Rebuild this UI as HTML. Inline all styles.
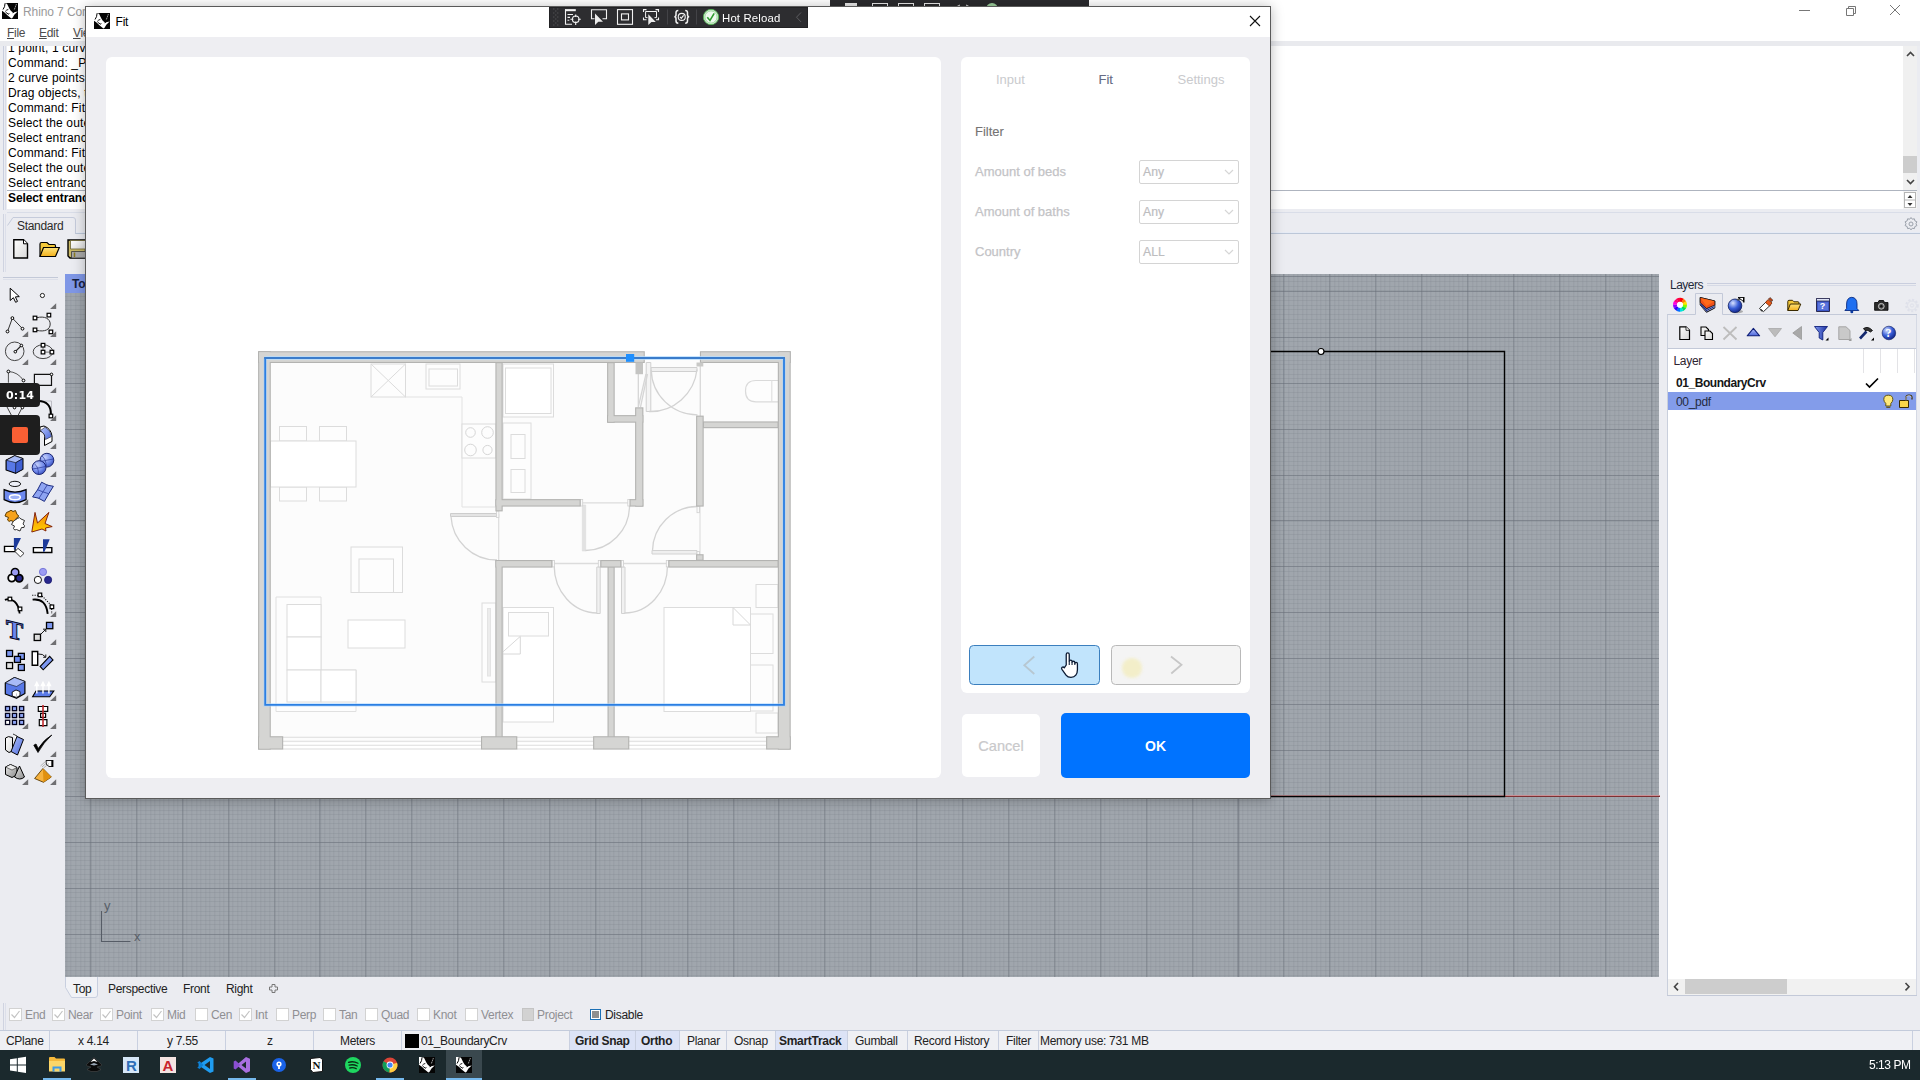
<!DOCTYPE html>
<html lang="en">
<head>
<meta charset="utf-8">
<title>Rhino 7 - Fit</title>
<style>
html,body{margin:0;padding:0;background:#ecedf2;}
body{width:1920px;height:1080px;overflow:hidden;font-family:"Liberation Sans",sans-serif;}
#root{position:relative;width:1920px;height:1080px;overflow:hidden;background:#ebecf1;}
.a{position:absolute;}
.t{position:absolute;white-space:nowrap;line-height:1;color:#1a1a1a;font-size:12px;}
svg{position:absolute;overflow:visible;}
.ui{font-size:12px;color:#222;}
.mn::first-letter{text-decoration:underline;}
</style>
</head>
<body>
<div id="root">
<!-- ===== Rhino main window chrome ===== -->
<div class="a" style="left:0px;top:0px;width:1920px;height:41px;background:#fff;"></div>
<div class="a" style="left:0px;top:41px;width:1920px;height:5px;background:#e9eaee;"></div>
<svg style="left:2px;top:3px" width="16" height="16" viewBox="0 0 16 16"><rect width="16" height="16" fill="#050505"/><path d="M0 0H2.900L5 .8L7.200 5.300L8.600 7.600L10.800 9.400L13.200 9L15.700 8.500L12.500 11.600L10.400 15L9.400 15.500L6 12.800L2.500 9.600L0 7.700Z" fill="#fff"/><path d="M3.100 .2Q3 4 1 6.500" fill="none" stroke="#050505" stroke-width="1"/><path d="M3.300 8.400Q4.400 6.900 6.300 6.400M3.700 9.200L6.600 11.300L7.200 10.200" fill="none" stroke="#050505" stroke-width=".9"/><path d="M10.700 9.800Q12.600 9.200 13.400 7.500" fill="none" stroke="#050505" stroke-width="1"/><path d="M14.300 1.300L12.400 6.400" fill="none" stroke="#fff" stroke-width=".8" stroke-dasharray="1.200 .9"/></svg>
<div class="t" style="left:23px;top:4.5px;font-size:12px;line-height:15px;color:#9a9a9a;letter-spacing:-0.3px;letter-spacing:-0.1px;">Rhino 7 Corporate - [Top]</div>
<div class="t mn" style="left:7px;top:25.500px;font-size:12px;line-height:15px;color:#4c4c4c;letter-spacing:-0.3px;">File</div>
<div class="t mn" style="left:39px;top:25.500px;font-size:12px;line-height:15px;color:#4c4c4c;letter-spacing:-0.3px;">Edit</div>
<div class="t mn" style="left:73px;top:25.500px;font-size:12px;line-height:15px;color:#4c4c4c;letter-spacing:-0.3px;">View</div>
<svg style="left:1790px;top:0" width="130" height="24" viewBox="0 0 130 24"><g stroke="#777" stroke-width="1" fill="none"><path d="M9 10.5h11"/><path d="M56.5 8.5h7v7h-7z M58.500 8.5v-2h7v7h-2" /><path d="M100 5l10 10M110 5l-10 10"/></g></svg>
<div class="a" style="left:7px;top:46px;width:1896px;height:144px;background:#fff;"></div>
<div class="a" style="left:7px;top:190px;width:1910px;height:1px;background:#aeb4bf;"></div>
<div class="a" style="left:7px;top:191px;width:1896px;height:18px;background:#fff;"></div>
<div class="a" style="left:1903px;top:46px;width:14px;height:144px;background:#f0f0f0;"></div>
<div class="a" style="left:1903px;top:156px;width:14px;height:17px;background:#cdcdcd;"></div>
<div class="a" style="left:1903px;top:191px;width:14px;height:18px;background:#f4f4f4;"></div>
<div class="a" style="left:3px;top:46px;width:1px;height:164px;background:#c9cede;"></div>
<div class="a" style="left:5px;top:46px;width:1px;height:164px;background:#d9dce8;"></div>
<svg style="left:1903px;top:46px" width="14" height="164" viewBox="0 0 14 164"><g stroke="#444" stroke-width="1.6" fill="none"><path d="M4 10l3.500 -3.500l3.500 3.500"/><path d="M4 134l3.500 3.500l3.500 -3.500"/></g><rect x="1.500" y="146.500" width="11" height="15" fill="#fff" stroke="#b5b5b5"/><path d="M1.500 154h11" stroke="#b5b5b5"/><path d="M4.500 152l2.500 -3l2.500 3z M4.500 157l2.500 3l2.500 -3z" fill="#333"/></svg>
<div class="a" style="left:7px;top:46px;width:1896px;height:144px;overflow:hidden;">
<div class="t" style="left:1px;top:-4.7px;font-size:12px;line-height:15px;color:#000;letter-spacing:-0.3px;letter-spacing:.15px;">1 point, 1 curve added to selection.</div>
<div class="t" style="left:1px;top:10.3px;font-size:12px;line-height:15px;color:#000;letter-spacing:-0.3px;letter-spacing:.15px;">Command: _Point</div>
<div class="t" style="left:1px;top:25.3px;font-size:12px;line-height:15px;color:#000;letter-spacing:-0.3px;letter-spacing:.15px;">2 curve points, 1 point added to selection.</div>
<div class="t" style="left:1px;top:40.3px;font-size:12px;line-height:15px;color:#000;letter-spacing:-0.3px;letter-spacing:.15px;">Drag objects, tap Alt to make a duplicate</div>
<div class="t" style="left:1px;top:55.3px;font-size:12px;line-height:15px;color:#000;letter-spacing:-0.3px;letter-spacing:.15px;">Command: Fit</div>
<div class="t" style="left:1px;top:70.3px;font-size:12px;line-height:15px;color:#000;letter-spacing:-0.3px;letter-spacing:.15px;">Select the outer boundary curve</div>
<div class="t" style="left:1px;top:85.3px;font-size:12px;line-height:15px;color:#000;letter-spacing:-0.3px;letter-spacing:.15px;">Select entrance point</div>
<div class="t" style="left:1px;top:100.3px;font-size:12px;line-height:15px;color:#000;letter-spacing:-0.3px;letter-spacing:.15px;">Command: Fit</div>
<div class="t" style="left:1px;top:115.3px;font-size:12px;line-height:15px;color:#000;letter-spacing:-0.3px;letter-spacing:.15px;">Select the outer boundary curve</div>
<div class="t" style="left:1px;top:130.3px;font-size:12px;line-height:15px;color:#000;letter-spacing:-0.3px;letter-spacing:.15px;">Select entrance point</div>
</div>
<div class="t" style="left:8px;top:191.3px;font-size:12px;line-height:15px;color:#000;letter-spacing:-0.3px;font-weight:bold;letter-spacing:-0.1px;">Select entrance point:</div>
<div class="a" style="left:7px;top:212px;width:1913px;height:1px;background:#d9dde8;"></div>
<div class="a" style="left:75px;top:232px;width:1845px;height:1px;background:#e6ebf5;"></div>
<div class="a" style="left:75px;top:233px;width:1845px;height:1px;background:#bcc7d8;"></div>
<svg style="left:0;top:210px" width="90" height="30" viewBox="0 0 90 30"><path d="M7.500 15.500 L13 7.500 H73 Q75.500 7.500 75.500 10 V23.500" fill="none" stroke="#c5cbdb"/></svg>
<div class="t" style="left:17px;top:218.5px;font-size:12px;line-height:15px;color:#2b2b2b;letter-spacing:-0.3px;">Standard</div>
<div class="a" style="left:3px;top:214px;width:1px;height:58px;background:#cfd3e0;"></div>
<div class="a" style="left:5px;top:214px;width:1px;height:58px;background:#dcdfea;"></div>
<svg style="left:1903px;top:216px" width="16" height="16" viewBox="0 0 16 16"><g fill="none" stroke="#9aa0aa" stroke-width="1"><circle cx="8" cy="8" r="2"/><path d="M8 1.500l1.300 1.700 2.100 -.4 .5 2.100 2 .9 -.9 1.900 .9 1.900 -2 .9 -.5 2.100 -2.100 -.4 -1.300 1.700 -1.300 -1.700 -2.100 .4 -.5 -2.100 -2 -.9 .9 -1.900 -.9 -1.900 2 -.9 .5 -2.100 2.100 .4z"/></g></svg>
<div class="a" style="left:3px;top:277px;width:55px;height:1px;background:#c3c9d8;"></div>
<div class="a" style="left:3px;top:279px;width:55px;height:1px;background:#dde0ea;"></div>
<div id="vp" class="a" style="left:64.500px;top:274px;width:1594.600px;height:703px;background-color:#a0a6ad;background-image:repeating-linear-gradient(to right,rgba(104,110,120,.50) 0,rgba(104,110,120,.50) 1px,transparent 1px,transparent 45.9px),repeating-linear-gradient(to bottom,rgba(104,110,120,.50) 0,rgba(104,110,120,.50) 1px,transparent 1px,transparent 45.9px),repeating-linear-gradient(to right,rgba(118,124,134,.22) 0,rgba(118,124,134,.22) 1px,transparent 1px,transparent 4.59px),repeating-linear-gradient(to bottom,rgba(118,124,134,.22) 0,rgba(118,124,134,.22) 1px,transparent 1px,transparent 4.59px);background-position:25.30px 0,0 17.00px,25.30px 0,0 17.00px;"></div>
<div class="a" style="left:65px;top:274px;width:30px;height:19px;background:#7f97e6;"></div>
<div class="t" style="left:72px;top:276.5px;font-size:12px;line-height:15px;color:#15203f;letter-spacing:-0.3px;font-weight:bold;">Top</div>
<div class="a" style="left:1270px;top:795px;width:390px;height:1px;background:#c98f94;"></div>
<div class="a" style="left:1270px;top:796px;width:390px;height:1px;background:#7d3033;"></div>
<svg style="left:1260px;top:340px" width="260" height="470" viewBox="0 0 260 470"><path d="M0 11.500H244.500V456.500H0" fill="none" stroke="#000" stroke-width="1.4"/><circle cx="61" cy="11.500" r="3" fill="#fff" stroke="#000" stroke-width="1.200"/></svg>
<svg style="left:94px;top:895px" width="60" height="60" viewBox="0 0 60 60"><path d="M7.500 16V46.500H36.500" fill="none" stroke="#565c66" stroke-width="1.100"/></svg>
<div class="t" style="left:104px;top:898.0px;font-size:13px;line-height:16px;color:#596069;letter-spacing:-0.3px;">y</div>
<div class="t" style="left:134px;top:929.0px;font-size:13px;line-height:16px;color:#596069;letter-spacing:-0.3px;">x</div>
<svg style="left:60px;top:977px" width="50" height="26" viewBox="0 0 50 26"><path d="M5.500 0 V10.500 L11.500 20.500 H35 Q37.500 20.500 37.500 18 V0" fill="#f1f2f6" stroke="#c8cfdf"/></svg>
<div class="t" style="left:73px;top:981.5px;font-size:12px;line-height:15px;color:#222;letter-spacing:-0.3px;">Top</div>
<div class="t" style="left:108px;top:981.5px;font-size:12px;line-height:15px;color:#222;letter-spacing:-0.3px;">Perspective</div>
<div class="t" style="left:183px;top:981.5px;font-size:12px;line-height:15px;color:#222;letter-spacing:-0.3px;">Front</div>
<div class="t" style="left:226px;top:981.5px;font-size:12px;line-height:15px;color:#222;letter-spacing:-0.3px;">Right</div>
<svg style="left:268px;top:983px" width="11" height="11" viewBox="0 0 11 11"><path d="M4 1.500h3v2.500h2.500v3H7v2.500H4V7H1.500V4H4z" fill="none" stroke="#777" stroke-width="1"/></svg>
<div class="a" style="left:3px;top:1003px;width:1px;height:28px;background:#cfd3e0;"></div>
<div class="a" style="left:5px;top:1003px;width:1px;height:28px;background:#dcdfea;"></div>
<div class="a" style="left:9px;top:1008px;width:11px;height:11px;background:#fff;border:1px solid #d2d2d2;"></div>
<svg style="left:9px;top:1008px" width="13" height="13" viewBox="0 0 13 13"><path d="M2.500 6.500l3 3l5 -6.500" fill="none" stroke="#c2c2c2" stroke-width="1.200"/></svg>
<div class="t" style="left:25px;top:1007.5px;font-size:12px;line-height:15px;color:#8f8f93;letter-spacing:-0.3px;">End</div>
<div class="a" style="left:52px;top:1008px;width:11px;height:11px;background:#fff;border:1px solid #d2d2d2;"></div>
<svg style="left:52px;top:1008px" width="13" height="13" viewBox="0 0 13 13"><path d="M2.500 6.500l3 3l5 -6.500" fill="none" stroke="#c2c2c2" stroke-width="1.200"/></svg>
<div class="t" style="left:68px;top:1007.5px;font-size:12px;line-height:15px;color:#8f8f93;letter-spacing:-0.3px;">Near</div>
<div class="a" style="left:100px;top:1008px;width:11px;height:11px;background:#fff;border:1px solid #d2d2d2;"></div>
<svg style="left:100px;top:1008px" width="13" height="13" viewBox="0 0 13 13"><path d="M2.500 6.500l3 3l5 -6.500" fill="none" stroke="#c2c2c2" stroke-width="1.200"/></svg>
<div class="t" style="left:116px;top:1007.5px;font-size:12px;line-height:15px;color:#8f8f93;letter-spacing:-0.3px;">Point</div>
<div class="a" style="left:151px;top:1008px;width:11px;height:11px;background:#fff;border:1px solid #d2d2d2;"></div>
<svg style="left:151px;top:1008px" width="13" height="13" viewBox="0 0 13 13"><path d="M2.500 6.500l3 3l5 -6.500" fill="none" stroke="#c2c2c2" stroke-width="1.200"/></svg>
<div class="t" style="left:167px;top:1007.5px;font-size:12px;line-height:15px;color:#8f8f93;letter-spacing:-0.3px;">Mid</div>
<div class="a" style="left:195px;top:1008px;width:11px;height:11px;background:#fff;border:1px solid #d2d2d2;"></div>
<div class="t" style="left:211px;top:1007.5px;font-size:12px;line-height:15px;color:#8f8f93;letter-spacing:-0.3px;">Cen</div>
<div class="a" style="left:239px;top:1008px;width:11px;height:11px;background:#fff;border:1px solid #d2d2d2;"></div>
<svg style="left:239px;top:1008px" width="13" height="13" viewBox="0 0 13 13"><path d="M2.500 6.500l3 3l5 -6.500" fill="none" stroke="#c2c2c2" stroke-width="1.200"/></svg>
<div class="t" style="left:255px;top:1007.5px;font-size:12px;line-height:15px;color:#8f8f93;letter-spacing:-0.3px;">Int</div>
<div class="a" style="left:276px;top:1008px;width:11px;height:11px;background:#fff;border:1px solid #d2d2d2;"></div>
<div class="t" style="left:292px;top:1007.5px;font-size:12px;line-height:15px;color:#8f8f93;letter-spacing:-0.3px;">Perp</div>
<div class="a" style="left:323px;top:1008px;width:11px;height:11px;background:#fff;border:1px solid #d2d2d2;"></div>
<div class="t" style="left:339px;top:1007.5px;font-size:12px;line-height:15px;color:#8f8f93;letter-spacing:-0.3px;">Tan</div>
<div class="a" style="left:365px;top:1008px;width:11px;height:11px;background:#fff;border:1px solid #d2d2d2;"></div>
<div class="t" style="left:381px;top:1007.5px;font-size:12px;line-height:15px;color:#8f8f93;letter-spacing:-0.3px;">Quad</div>
<div class="a" style="left:417px;top:1008px;width:11px;height:11px;background:#fff;border:1px solid #d2d2d2;"></div>
<div class="t" style="left:433px;top:1007.5px;font-size:12px;line-height:15px;color:#8f8f93;letter-spacing:-0.3px;">Knot</div>
<div class="a" style="left:465px;top:1008px;width:11px;height:11px;background:#fff;border:1px solid #d2d2d2;"></div>
<div class="t" style="left:481px;top:1007.5px;font-size:12px;line-height:15px;color:#8f8f93;letter-spacing:-0.3px;">Vertex</div>
<div class="a" style="left:522px;top:1008px;width:10px;height:11px;background:#d2d2d2;border:1px solid #c4c4c4;"></div>
<div class="t" style="left:537px;top:1007.5px;font-size:12px;line-height:15px;color:#8f8f93;letter-spacing:-0.3px;">Project</div>
<div class="a" style="left:591px;top:1009.500px;width:7px;height:7px;background:#8f8f8f;border:1px solid #fff;outline:1px solid #1b6fb5;outline-offset:0;"></div>
<div class="t" style="left:605px;top:1007.5px;font-size:12px;line-height:15px;color:#222;letter-spacing:-0.3px;">Disable</div>
<div class="a" style="left:0px;top:1031px;width:1920px;height:19px;background:#eff0f4;"></div>
<div class="a" style="left:0px;top:1030px;width:1920px;height:1px;background:#c3cbdb;"></div>
<div class="a" style="left:49px;top:1031px;width:1px;height:19px;background:#c9d0e0;"></div>
<div class="a" style="left:137px;top:1031px;width:1px;height:19px;background:#c9d0e0;"></div>
<div class="a" style="left:225px;top:1031px;width:1px;height:19px;background:#c9d0e0;"></div>
<div class="a" style="left:313px;top:1031px;width:1px;height:19px;background:#c9d0e0;"></div>
<div class="a" style="left:401px;top:1031px;width:1px;height:19px;background:#c9d0e0;"></div>
<div class="a" style="left:569px;top:1031px;width:1px;height:19px;background:#c9d0e0;"></div>
<div class="a" style="left:635px;top:1031px;width:1px;height:19px;background:#c9d0e0;"></div>
<div class="a" style="left:679px;top:1031px;width:1px;height:19px;background:#c9d0e0;"></div>
<div class="a" style="left:726px;top:1031px;width:1px;height:19px;background:#c9d0e0;"></div>
<div class="a" style="left:775px;top:1031px;width:1px;height:19px;background:#c9d0e0;"></div>
<div class="a" style="left:847px;top:1031px;width:1px;height:19px;background:#c9d0e0;"></div>
<div class="a" style="left:907px;top:1031px;width:1px;height:19px;background:#c9d0e0;"></div>
<div class="a" style="left:998px;top:1031px;width:1px;height:19px;background:#c9d0e0;"></div>
<div class="a" style="left:1038px;top:1031px;width:1px;height:19px;background:#c9d0e0;"></div>
<div class="a" style="left:1912px;top:1031px;width:1px;height:19px;background:#c9d0e0;"></div>
<div class="a" style="left:570px;top:1031px;width:65px;height:19px;background:#dce3f6;"></div>
<div class="a" style="left:636px;top:1031px;width:43px;height:19px;background:#dce3f6;"></div>
<div class="a" style="left:776px;top:1031px;width:71px;height:19px;background:#dce3f6;"></div>
<div class="t" style="left:6px;top:1033.5px;font-size:12px;line-height:15px;color:#222;letter-spacing:-0.3px;">CPlane</div>
<div class="t" style="left:78px;top:1033.5px;font-size:12px;line-height:15px;color:#222;letter-spacing:-0.3px;">x 4.14</div>
<div class="t" style="left:167px;top:1033.5px;font-size:12px;line-height:15px;color:#222;letter-spacing:-0.3px;">y 7.55</div>
<div class="t" style="left:267px;top:1033.5px;font-size:12px;line-height:15px;color:#222;letter-spacing:-0.3px;">z</div>
<div class="t" style="left:340px;top:1033.5px;font-size:12px;line-height:15px;color:#222;letter-spacing:-0.3px;">Meters</div>
<div class="a" style="left:405px;top:1034px;width:14px;height:14px;background:#000;"></div>
<div class="t" style="left:421px;top:1033.5px;font-size:12px;line-height:15px;color:#222;letter-spacing:-0.3px;">01_BoundaryCrv</div>
<div class="t" style="left:575px;top:1033.5px;font-size:12px;line-height:15px;color:#222;letter-spacing:-0.3px;font-weight:bold;">Grid Snap</div>
<div class="t" style="left:641px;top:1033.5px;font-size:12px;line-height:15px;color:#222;letter-spacing:-0.3px;font-weight:bold;">Ortho</div>
<div class="t" style="left:687px;top:1033.5px;font-size:12px;line-height:15px;color:#222;letter-spacing:-0.3px;">Planar</div>
<div class="t" style="left:734px;top:1033.5px;font-size:12px;line-height:15px;color:#222;letter-spacing:-0.3px;">Osnap</div>
<div class="t" style="left:779px;top:1033.5px;font-size:12px;line-height:15px;color:#222;letter-spacing:-0.3px;font-weight:bold;">SmartTrack</div>
<div class="t" style="left:855px;top:1033.5px;font-size:12px;line-height:15px;color:#222;letter-spacing:-0.3px;">Gumball</div>
<div class="t" style="left:914px;top:1033.5px;font-size:12px;line-height:15px;color:#222;letter-spacing:-0.3px;">Record History</div>
<div class="t" style="left:1006px;top:1033.5px;font-size:12px;line-height:15px;color:#222;letter-spacing:-0.3px;">Filter</div>
<div class="t" style="left:1040px;top:1033.5px;font-size:12px;line-height:15px;color:#222;letter-spacing:-0.3px;">Memory use: 731 MB</div>
<div class="a" style="left:0px;top:1050px;width:1920px;height:30px;background:#1b292d;"></div>
<div class="a" style="left:446px;top:1050px;width:36px;height:30px;background:#3a484e;"></div>
<div class="a" style="left:43px;top:1078px;width:28px;height:2px;background:#76b9ed;"></div>
<div class="a" style="left:228px;top:1078px;width:28px;height:2px;background:#76b9ed;"></div>
<div class="a" style="left:376px;top:1078px;width:28px;height:2px;background:#76b9ed;"></div>
<div class="a" style="left:446px;top:1078px;width:36px;height:2px;background:#76b9ed;"></div>
<div class="t" style="left:1868.5px;top:1057.5px;font-size:12px;line-height:15px;color:#fff;letter-spacing:-0.3px;letter-spacing:-0.45px;will-change:transform;">5:13 PM</div>
<!-- ===== left toolbars ===== -->
<svg style="left:0;top:0" width="90" height="800" viewBox="0 0 90 800"><defs><linearGradient id="gb" x1="0" y1="0" x2="1" y2="1"><stop offset="0" stop-color="#b4c3f8"/><stop offset="1" stop-color="#4a68dc"/></linearGradient><radialGradient id="gs" cx=".35" cy=".3" r=".8"><stop offset="0" stop-color="#c5d0fa"/><stop offset=".6" stop-color="#6f88ea"/><stop offset="1" stop-color="#3048b8"/></radialGradient><linearGradient id="gy" x1="0" y1="0" x2="0" y2="1"><stop offset="0" stop-color="#fde37a"/><stop offset="1" stop-color="#f2b01c"/></linearGradient><linearGradient id="go" x1="0" y1="0" x2="0" y2="1"><stop offset="0" stop-color="#f58a0a"/><stop offset="1" stop-color="#ffd000"/></linearGradient><linearGradient id="gw" x1="0" y1="0" x2="1" y2="1"><stop offset="0" stop-color="#ffffff"/><stop offset="1" stop-color="#d9d9d9"/></linearGradient><linearGradient id="gg" x1="0" y1="0" x2="1" y2="1"><stop offset="0" stop-color="#e8e8e8"/><stop offset="1" stop-color="#8c8c8c"/></linearGradient></defs><path d="M13.800 239.800H23.500L27.500 243.800V258H13.800Z" fill="url(#gw)" stroke="#000" stroke-width="1.4" /><path d="M23.500 239.800V243.800H27.500" fill="#fff" stroke="#000" stroke-width="1" /><path d="M40 256.500V244Q40 242.500 41.500 242.500H47L49 244.500H54.500Q55.500 244.500 55.500 246V247.500" fill="#f4c93a" stroke="#000" stroke-width="1.2" /><path d="M40 256.500L43.500 247.500H59.300L55.500 256.500Z" fill="url(#gy)" stroke="#000" stroke-width="1.2" /><path d="M68 240H85.500V258H70L68 256Z" fill="#c8b865" stroke="#000" stroke-width="1.4" /><path d="M70.500 240.500H85.500V249H70.500Z" fill="url(#gw)" stroke="#6b6330" stroke-width="0.8" /><path d="M71.500 251.500H85.500V258H71.500Z" fill="#a9a9a9" stroke="#3a3a3a" stroke-width="0.8" /><path d="M74.500 252.500V257" fill="none" stroke="#8a7a20" stroke-width="1.5" /><path d="M10.200 288.200V300.500L13.400 297.700L15.600 302.300L17.500 301.400L15.400 296.900L19.300 296.600Z" fill="#fff" stroke="#000" stroke-width="1" stroke-linejoin="round"/><circle cx="42.4" cy="295.5" r="2.1" fill="#fff" stroke="#222" stroke-width="1"/><path d="M56.2 303.2V309H50.1Z" fill="#6f6f72"/><path d="M7.500 331.500L12.400 318.100L22.500 328.700" fill="none" stroke="#333" stroke-width="1" /><circle cx="7.5" cy="331.5" r="1.4" fill="#fff" stroke="#000" stroke-width="1"/><circle cx="12.4" cy="318.1" r="1.4" fill="#fff" stroke="#000" stroke-width="1"/><circle cx="22.5" cy="328.7" r="1.4" fill="#fff" stroke="#000" stroke-width="1"/><path d="M28.2 331.2V337H22.1Z" fill="#6f6f72"/><path d="M36.500 317.800C45 315.500 50.200 319 50.200 324C50.200 329.500 45 332.300 36.500 330.300" fill="none" stroke="#333" stroke-width="1" /><rect x="33.20" y="316.20" width="3.6" height="3.6" fill="#fff" stroke="#000" stroke-width="1.2"/><rect x="47.10" y="313.30" width="3.6" height="3.6" fill="#fff" stroke="#000" stroke-width="1.2"/><rect x="33.20" y="328.10" width="3.6" height="3.6" fill="#fff" stroke="#000" stroke-width="1.2"/><rect x="49.10" y="330.10" width="3.6" height="3.6" fill="#fff" stroke="#000" stroke-width="1.2"/><path d="M56.2 331.2V337H50.1Z" fill="#6f6f72"/><circle cx="14.7" cy="351.3" r="9.3" fill="none" stroke="#444" stroke-width="1"/><path d="M15.300 351.700L21.400 345.500" fill="none" stroke="#222" stroke-width="1.2" /><circle cx="15.3" cy="351.7" r="1.3" fill="#fff" stroke="#000" stroke-width="1"/><circle cx="21.4" cy="345.5" r="1.3" fill="#fff" stroke="#000" stroke-width="1"/><path d="M28.2 359.2V365H22.1Z" fill="#6f6f72"/><ellipse cx="43" cy="351.700" rx="9.800" ry="6.900" fill="none" stroke="#444" stroke-width="1"/><path d="M43 345.200V352.100H51.900" fill="none" stroke="#555" stroke-width="0.8" /><rect x="41.20" y="343.40" width="3.6" height="3.6" fill="#fff" stroke="#000" stroke-width="1.2"/><rect x="41.20" y="350.30" width="3.6" height="3.6" fill="#fff" stroke="#000" stroke-width="1.2"/><rect x="50.10" y="350.30" width="3.6" height="3.6" fill="#fff" stroke="#000" stroke-width="1.2"/><path d="M56.2 359.2V365H50.1Z" fill="#6f6f72"/><path d="M8.400 382.700V371.500Q18 372 23.500 380.500" fill="none" stroke="#555" stroke-width="1" /><circle cx="8.4" cy="371.5" r="1.4" fill="#fff" stroke="#000" stroke-width="1"/><circle cx="23.5" cy="380.5" r="1.4" fill="#fff" stroke="#000" stroke-width="1"/><path d="M34.400 374.400H51.500V385.400H34.400Z" fill="none" stroke="#111" stroke-width="1.2" /><circle cx="51.5" cy="374.4" r="1.3" fill="#fff" stroke="#000" stroke-width="1"/><path d="M56.2 387.2V393H50.1Z" fill="#6f6f72"/><path d="M6.500 406L11.500 415.500H18L23 406" fill="none" stroke="#444" stroke-width="1" /><circle cx="14.5" cy="407.6" r="1.3" fill="#fff" stroke="#000" stroke-width="1"/><circle cx="22.4" cy="407.6" r="1.3" fill="#fff" stroke="#000" stroke-width="1"/><path d="M40 401H51.500V414.500" fill="none" stroke="#bdbdc4" stroke-width="1" /><path d="M38 401.100Q51 401 50.900 414.500" fill="none" stroke="#000" stroke-width="2" /><rect x="49.10" y="414.20" width="3.6" height="3.6" fill="#fff" stroke="#000" stroke-width="1.2"/><path d="M56.2 415.2V421H50.1Z" fill="#6f6f72"/><path d="M40 427L44 426Q51 428.500 52 436L52 441.500L44.500 445.500V439Q46 433 40 431Z" fill="#fff" stroke="#000" stroke-width="1" /><path d="M40.500 430.500L45 427.300Q50.500 430 51.500 436.500L45.500 439.500Q45.500 434 40.500 430.500Z" fill="url(#gb)" stroke="#223" stroke-width="0.6" /><path d="M56.2 443.2V449H50.1Z" fill="#6f6f72"/><path d="M14.700 455.700L22.800 458.600V469.200L15.500 473.300L6.100 470V460.200Z" fill="#5878e6" stroke="#000" stroke-width="1.2" stroke-linejoin="round"/><path d="M14.700 455.700L22.800 458.600L15.800 462.700L6.100 460.200Z" fill="#a9bbf7" stroke="#000" stroke-width="0.6" /><path d="M15.800 462.700L22.800 458.600V469.200L15.500 473.300Z" fill="#3f5fd2" stroke="#000" stroke-width="0.6" /><path d="M28.2 471.2V477H22.1Z" fill="#6f6f72"/><circle cx="46.9" cy="460.2" r="6.9" fill="url(#gs)" stroke="#1a2470" stroke-width="1"/><circle cx="39.1" cy="467.6" r="6.9" fill="url(#gs)" stroke="#1a2470" stroke-width="1"/><path d="M42 456Q46 459 46.500 467M41 461.500Q47 460 53.500 459M34.500 464Q38.500 466.500 38.500 474.500M32.500 469Q39 468 45.500 466.500" fill="none" stroke="#2a3a9a" stroke-width="0.7" /><path d="M56.2 471.2V477H50.1Z" fill="#6f6f72"/><ellipse cx="14.900" cy="483.900" rx="5.700" ry="2.600" fill="#eef0f8" stroke="#111" stroke-width="1"/><path d="M4.100 489.600Q14.900 494.500 26.100 489.600V499.600Q14.900 505.500 4.100 499.600Z" fill="#6d89ee" stroke="#000" stroke-width="1.2" /><ellipse cx="14.900" cy="497.300" rx="5.400" ry="2.500" fill="#9db0f6" stroke="#fff" stroke-width="1.500"/><path d="M28.2 499.2V505H22.1Z" fill="#6f6f72"/><path d="M41.600 482.200Q47 486 53.400 486.300Q49 493 44.400 501.400Q38 497 32.600 496.900Q38 490 41.600 482.200Z" fill="#8ea4f2" stroke="#1a2a80" stroke-width="1" /><path d="M37 489.500Q42.500 492 49 493.800M47.500 484.500Q43.500 491 38.500 499" fill="none" stroke="#2a3a9a" stroke-width="0.8" /><path d="M56.2 499.2V505H50.1Z" fill="#6f6f72"/><path d="M9 511.500Q11 509 13 511.500L15.500 510.500L17 514.500Q19.500 515 18 517.500L16 518.500L14.500 522L11 520.500Q9 522.500 7.500 520L8.500 517.500L5 516L6.500 512.500Z" fill="#f6a21a" stroke="#5a3a00" stroke-width="1" /><path d="M17.500 518.500Q19.500 516.500 21 519L24.500 520.500L23 524Q25.500 525.500 24 527.500L21.500 527.500L20 531L16.500 529.500Q14.500 531 13.500 528.500L14.500 526L11.500 524.500L13.500 521Z" fill="#fff" stroke="#333" stroke-width="1" /><path d="M35 512.400L37.500 523L48.900 512.400L45 523.500L52.200 526.600L45.500 528L46 531L42 529L31.800 532Z" fill="url(#go)" stroke="#7a1500" stroke-width="0.9" /><path d="M4.500 546.400H15.100V551.600H4.500Z" fill="#fff" stroke="#000" stroke-width="1.4" /><path d="M17.900 548.300L24 553.400L20.400 556.900L15.100 551.600Z" fill="#fff" stroke="#222" stroke-width="0.9" /><path d="M13.900 538.100H21L15.300 549.500H13.900Z" fill="#1c3a9a" stroke="none" stroke-width="0" /><path d="M33.400 547.600H51.800V552.500H33.400Z" fill="#fff" stroke="#000" stroke-width="1.4" /><path d="M43 539.200H49.700L44.500 551.800H43Z" fill="#1c3a9a" stroke="none" stroke-width="0" /><circle cx="15.1" cy="572.3" r="3.6" fill="#9a9af2" stroke="#000" stroke-width="1.8"/><circle cx="11.8" cy="578" r="3.6" fill="#fff" stroke="#000" stroke-width="1.8"/><circle cx="19.2" cy="578.3" r="3.6" fill="#28288e" stroke="#000" stroke-width="1.8"/><circle cx="15.1" cy="572.3" r="2.9" fill="#9a9af2" stroke="#9a9af2" stroke-width="0.1"/><path d="M28.2 583.2V589H22.1Z" fill="#6f6f72"/><circle cx="43" cy="571.9" r="3.6" fill="#9c9cf4" stroke="#6a6ad0" stroke-width="0.8"/><circle cx="37.9" cy="579.9" r="3.6" fill="#fff" stroke="#111" stroke-width="1"/><circle cx="48.1" cy="579.9" r="3.6" fill="#28288e" stroke="#1a1a70" stroke-width="0.8"/><path d="M4.900 599.800Q10 598 14.500 601.500Q19 605.500 19.600 613.500" fill="none" stroke="#000" stroke-width="1.8" /><rect x="8.10" y="597.20" width="3.6" height="3.6" fill="#fff" stroke="#000" stroke-width="1.2"/><rect x="18.20" y="607.10" width="3.6" height="3.6" fill="#fff" stroke="#000" stroke-width="1.2"/><path d="M32.600 599.600Q46 598 47.700 613.900" fill="none" stroke="#000" stroke-width="1.9" /><path d="M32.200 595.200H39M42 596L51.500 605.500M51.700 609V614" fill="none" stroke="#000" stroke-width="1.1" stroke-dasharray="1.1 1.3"/><rect x="38.10" y="593.10" width="3.6" height="3.6" fill="#fff" stroke="#000" stroke-width="1.2"/><rect x="50.10" y="605.00" width="3.6" height="3.6" fill="#fff" stroke="#000" stroke-width="1.2"/><path d="M56.2 611.2V617H50.1Z" fill="#6f6f72"/><rect x="46.50" y="622.40" width="6.3" height="6.3" fill="#7c97f0" stroke="#000" stroke-width="1.3"/><rect x="34.20" y="634.20" width="6.3" height="6.3" fill="#dcdcdc" stroke="#000" stroke-width="1.3"/><path d="M40.500 634.500L45.500 629.500M43 629.200H45.800V632" fill="none" stroke="#000" stroke-width="0.9" /><path d="M56.2 639.2V645H50.1Z" fill="#6f6f72"/><rect x="6.55" y="650.45" width="6" height="6" fill="#7c97f0" stroke="#000" stroke-width="1.3"/><rect x="18.35" y="653.35" width="6" height="6" fill="#7c97f0" stroke="#000" stroke-width="1.3"/><rect x="14.45" y="656.40" width="6" height="6" fill="#6d89ee" stroke="#000" stroke-width="1.3"/><rect x="6.55" y="662.55" width="6" height="6" fill="#e4e4e4" stroke="#000" stroke-width="1.3"/><rect x="18.35" y="664.45" width="6" height="6" fill="#7c97f0" stroke="#000" stroke-width="1.3"/><path d="M32.200 651.500H37.700V665.300H32.200Z" fill="#fff" stroke="#000" stroke-width="1.4" /><path d="M38 654Q43 653.500 45.500 657M43.200 657.300H45.800V654.500" fill="none" stroke="#000" stroke-width="0.9" /><path d="M49.700 656.300L53 660L43.200 669.800L40.100 666.500Z" fill="#7c97f0" stroke="#000" stroke-width="1.1" /><path d="M14.500 677.500L24.900 681.500V693.500L16.500 698.300L5.300 694V683Z" fill="#5878e6" stroke="#000" stroke-width="1.2" stroke-linejoin="round"/><path d="M14.500 677.500L24.900 681.500L16.500 686.500L5.300 683Z" fill="#a9bbf7" stroke="#000" stroke-width="0.5" /><path d="M12.200 692L16 690L20 691.500V695.500L16.500 697.500L12.200 696Z" fill="#fff" stroke="#000" stroke-width="0.9" /><path d="M16.500 693.500V697.500" fill="none" stroke="#999" stroke-width="0.6" /><path d="M28.2 695.2V701H22.1Z" fill="#6f6f72"/><path d="M36 691H53.800L49.700 696.700H32.600Z" fill="#5a7ae6" stroke="#000" stroke-width="1.1" /><path d="M36.8 693.500V684.500M35.199999999999996 685.500L36.8 682.300L38.4 685.500Z" fill="#fff" stroke="#fff" stroke-width="1.4" /><path d="M43 693.500V684.500M41.4 685.500L43 682.300L44.6 685.500Z" fill="#fff" stroke="#fff" stroke-width="1.4" /><path d="M48.9 693.500V684.500M47.3 685.500L48.9 682.300L50.5 685.500Z" fill="#fff" stroke="#fff" stroke-width="1.4" /><path d="M56.2 695.2V701H50.1Z" fill="#6f6f72"/><rect x="5.50" y="706.50" width="4.2" height="4.2" fill="#8ea5f5" stroke="#02021c" stroke-width="1.3"/><rect x="5.50" y="713.40" width="4.2" height="4.2" fill="#8ea5f5" stroke="#02021c" stroke-width="1.3"/><rect x="5.50" y="720.30" width="4.2" height="4.2" fill="#fff" stroke="#02021c" stroke-width="1.3"/><rect x="12.40" y="706.50" width="4.2" height="4.2" fill="#8ea5f5" stroke="#02021c" stroke-width="1.3"/><rect x="12.40" y="713.40" width="4.2" height="4.2" fill="#8ea5f5" stroke="#02021c" stroke-width="1.3"/><rect x="12.40" y="720.30" width="4.2" height="4.2" fill="#8ea5f5" stroke="#02021c" stroke-width="1.3"/><rect x="19.50" y="706.50" width="4.2" height="4.2" fill="#8ea5f5" stroke="#02021c" stroke-width="1.3"/><rect x="19.50" y="713.40" width="4.2" height="4.2" fill="#8ea5f5" stroke="#02021c" stroke-width="1.3"/><rect x="19.50" y="720.30" width="4.2" height="4.2" fill="#8ea5f5" stroke="#02021c" stroke-width="1.3"/><path d="M28.2 723.2V729H22.1Z" fill="#6f6f72"/><path d="M38.300 706.500H47.700V711.400H38.300ZM40.600 713.400H45.600V717.300H40.600ZM39.300 719.600H46.900V725.700H39.300Z" fill="#fff" stroke="#000" stroke-width="1.2" /><path d="M43 704.900V726.900" fill="none" stroke="#c0282d" stroke-width="1.6" /><path d="M56.2 723.2V729H50.1Z" fill="#6f6f72"/><path d="M5.500 738Q8 735.500 12.500 737.500V751L9 752.500L5.500 750Z" fill="url(#gw)" stroke="#000" stroke-width="1" /><path d="M13 734L17 736V741" fill="#fff" stroke="#000" stroke-width="0.8" /><path d="M17 736.500L23.500 739.500L17.500 755L11 751.500Z" fill="url(#gb)" stroke="#000" stroke-width="1" /><path d="M28.2 751.2V757H22.1Z" fill="#6f6f72"/><path d="M33.800 745.200L36 744L38.200 748.500Q44 739.500 51.800 735Q43.500 742.500 38 752.500Z" fill="#000" stroke="#000" stroke-width="0.8" stroke-linejoin="round"/><path d="M56.2 751.2V757H50.1Z" fill="#6f6f72"/><path d="M10.500 764.500L17 767.500V775L12 777.500L5.500 774.500V767Z" fill="url(#gg)" stroke="#000" stroke-width="1" /><path d="M10.500 764.500L17 767.500L12 770L5.500 767Z" fill="#ededed" stroke="#000" stroke-width="0.5" /><path d="M19.500 766L24.500 777Q20 781 14.500 777Z" fill="url(#gg)" stroke="#000" stroke-width="1" /><path d="M28.2 779.2V785H22.1Z" fill="#6f6f72"/><path d="M42.900 768.500L51.300 777L43.500 782.300L34.600 778.500Z" fill="#f6b23f" stroke="#5a3a00" stroke-width="0.9" /><path d="M42.900 768.500L51.300 777L43.500 782.300Z" fill="#e0900f" stroke="none" stroke-width="0" /><path d="M46 760.500H52V766.500H49L46.500 764.500Z" fill="#fff" stroke="#000" stroke-width="0.9" /><path d="M52.500 760V767" fill="none" stroke="#000" stroke-width="1.8" /><path d="M40.500 766L46 761M42 767L47.500 762M43.500 768L49 763.500" fill="none" stroke="#999" stroke-width="0.7" /><path d="M56.2 779.2V785H50.1Z" fill="#6f6f72"/></svg>
<div class="t" style="left:5.500px;top:617px;font-family:'DejaVu Serif','Liberation Serif',serif;font-weight:bold;font-size:23px;line-height:28px;color:#6a86ee;-webkit-text-stroke:.9px #05051e;transform:skewY(14deg);">T</div>
<div class="a" style="left:0;top:383px;width:40px;height:23.500px;background:#1e1e1e;border-radius:0 4px 4px 0;"></div>
<div class="t" style="left:6px;top:387.500px;font-family:'DejaVu Sans','Liberation Sans',sans-serif;font-weight:bold;font-size:11px;line-height:15px;color:#fff;letter-spacing:.2px;will-change:transform;">0:14</div>
<div class="a" style="left:0;top:415px;width:40px;height:39.500px;background:#1e1e1e;border-radius:0 4px 4px 0;"></div>
<div class="a" style="left:12px;top:427px;width:16px;height:16px;background:#f95f34;border-radius:2px;"></div>
<!-- ===== Layers panel ===== -->
<div class="t" style="left:1670px;top:278.0px;font-size:12px;line-height:15px;color:#1f2a3a;letter-spacing:-0.3px;letter-spacing:-0.5px;">Layers</div>
<div class="a" style="left:1707px;top:283px;width:209px;height:1px;background:#c9cede;"></div>
<div class="a" style="left:1707px;top:285px;width:209px;height:1px;background:#d6daE6;"></div>
<div class="a" style="left:1668px;top:349px;width:248px;height:630px;background:#fff;"></div>
<div class="a" style="left:1667px;top:348px;width:250px;height:1px;background:#c3c9d8;"></div>
<div class="a" style="left:1667px;top:314px;width:1px;height:682px;background:#c9cfdc;"></div>
<div class="a" style="left:1916px;top:314px;width:1px;height:682px;background:#d5d9e4;"></div>
<div class="a" style="left:1667px;top:995px;width:250px;height:1px;background:#c3c9d8;"></div>
<div class="a" style="left:1863px;top:349px;width:1px;height:24px;background:#e3e3e6;"></div>
<div class="a" style="left:1880px;top:349px;width:1px;height:24px;background:#e3e3e6;"></div>
<div class="a" style="left:1897px;top:349px;width:1px;height:24px;background:#e3e3e6;"></div>
<div class="a" style="left:1914px;top:349px;width:1px;height:24px;background:#e3e3e6;"></div>
<div class="t" style="left:1673.5px;top:354.0px;font-size:12px;line-height:15px;color:#2e2430;letter-spacing:-0.3px;">Layer</div>
<div class="t" style="left:1676px;top:375.5px;font-size:12px;line-height:15px;color:#161616;letter-spacing:-0.3px;font-weight:bold;letter-spacing:-0.45px;">01_BoundaryCrv</div>
<div class="a" style="left:1668px;top:392px;width:248px;height:18px;background:#839cea;"></div>
<div class="t" style="left:1676px;top:394.8px;font-size:12px;line-height:15px;color:#232a40;letter-spacing:-0.3px;">00_pdf</div>
<div class="a" style="left:1668px;top:979px;width:248px;height:16px;background:#f1f1f1;"></div>
<div class="a" style="left:1685px;top:979px;width:102px;height:15px;background:#cdcdcd;"></div>
<svg style="left:1660px;top:290px" width="260" height="710" viewBox="1660 290 260 710"><defs><linearGradient id="lw" x1="0" y1="0" x2="1" y2="1"><stop offset="0" stop-color="#fff"/><stop offset="1" stop-color="#d4d4d4"/></linearGradient><radialGradient id="lsph" cx=".35" cy=".3" r=".8"><stop offset="0" stop-color="#d8e2ff"/><stop offset=".5" stop-color="#3a5fd8"/><stop offset="1" stop-color="#0a1a78"/></radialGradient><linearGradient id="lbl" x1="0" y1="0" x2="0" y2="1"><stop offset="0" stop-color="#b9c6fa"/><stop offset="1" stop-color="#4b66dc"/></linearGradient><linearGradient id="lfu" x1="0" y1="0" x2="1" y2="0"><stop offset="0" stop-color="#7f98f0"/><stop offset="1" stop-color="#1a2f9e"/></linearGradient><linearGradient id="lyl" x1="0" y1="0" x2="0" y2="1"><stop offset="0" stop-color="#fde37a"/><stop offset="1" stop-color="#f2b01c"/></linearGradient></defs><path d="M1667.500 314.500H1695.500V293.500H1722.500V314.500H1917" fill="none" stroke="#c3c9d8" stroke-width="1" /><path d="M1680.00 297.80A7 7 0 0 1 1683.68 298.85L1681.58 302.25A3 3 0 0 0 1680.00 301.80Z" fill="#ff0000"/><path d="M1683.50 298.74A7 7 0 0 1 1686.16 301.48L1682.64 303.38A3 3 0 0 0 1681.50 302.20Z" fill="#ff8000"/><path d="M1686.06 301.30A7 7 0 0 1 1687.00 305.01L1683.00 304.89A3 3 0 0 0 1682.60 303.30Z" fill="#ffe000"/><path d="M1687.00 304.80A7 7 0 0 1 1685.95 308.48L1682.55 306.38A3 3 0 0 0 1683.00 304.80Z" fill="#80ff00"/><path d="M1686.06 308.30A7 7 0 0 1 1683.32 310.96L1681.42 307.44A3 3 0 0 0 1682.60 306.30Z" fill="#00e060"/><path d="M1683.50 310.86A7 7 0 0 1 1679.79 311.80L1679.91 307.80A3 3 0 0 0 1681.50 307.40Z" fill="#00e0e0"/><path d="M1680.00 311.80A7 7 0 0 1 1676.32 310.75L1678.42 307.35A3 3 0 0 0 1680.00 307.80Z" fill="#0070ff"/><path d="M1676.50 310.86A7 7 0 0 1 1673.84 308.12L1677.36 306.22A3 3 0 0 0 1678.50 307.40Z" fill="#3000ff"/><path d="M1673.94 308.30A7 7 0 0 1 1673.00 304.59L1677.00 304.71A3 3 0 0 0 1677.40 306.30Z" fill="#9000ff"/><path d="M1673.00 304.80A7 7 0 0 1 1674.05 301.12L1677.45 303.22A3 3 0 0 0 1677.00 304.80Z" fill="#ff00e0"/><path d="M1673.94 301.30A7 7 0 0 1 1676.68 298.64L1678.58 302.16A3 3 0 0 0 1677.40 303.30Z" fill="#ff0080"/><path d="M1676.50 298.74A7 7 0 0 1 1680.21 297.80L1680.09 301.80A3 3 0 0 0 1678.50 302.20Z" fill="#ff0040"/><circle cx="1680" cy="304.8" r="3" fill="#fff"/><path d="M1700.200 297.500L1714.800 301V308L1706.500 312.300L1700.200 305Z" fill="#1b2e8a" stroke="#111" stroke-width="1" stroke-linejoin="round"/><path d="M1700.500 303L1706.500 309.500L1714.500 305.500V307.500L1706.500 311.500L1700.500 305Z" fill="#fff" stroke="none" stroke-width="0" /><path d="M1700.500 304L1706.500 310.500L1714.500 306.500" fill="none" stroke="#1b2e8a" stroke-width="1.3" /><path d="M1700.200 297.500L1714.800 301V305L1706.500 308.500L1700.200 302.500Z" fill="#f0501a" stroke="#111" stroke-width="0.6" /><path d="M1700.500 298L1714.500 301.300L1706.500 306Z" fill="#ff6a1a" stroke="none" stroke-width="0" /><ellipse cx="1736.500" cy="311.500" rx="6.500" ry="1.800" fill="#8e8e8e" opacity=".7"/><circle cx="1735" cy="305.800" r="6.800" fill="url(#lsph)" stroke="#0a1a60" stroke-width=".8"/><path d="M1737 300L1741.500 298.200" fill="none" stroke="#555" stroke-width="1.6" /><path d="M1738 297.500H1743.500V301.500L1741 299.500Z" fill="#fff" stroke="#000" stroke-width="0.9" /><path d="M1743.800 297V302.500" fill="none" stroke="#000" stroke-width="1.4" /><path d="M1759.400 308.500L1766.500 301.500L1770.500 305L1763.500 311.600Z" fill="#fff" stroke="#333" stroke-width="1" /><path d="M1760.500 309.500L1762.500 311.300" fill="none" stroke="#333" stroke-width="1.5" /><path d="M1765.500 302.500L1768 299.500L1772 303L1769.500 306Z" fill="#e85a1c" stroke="#7a2a00" stroke-width="0.8" /><path d="M1768.500 299L1770 297.500L1772.800 300L1771.500 301.800Z" fill="#c04010" stroke="#333" stroke-width="0.6" /><path d="M1787.800 310.500V301.500Q1787.800 300.300 1789 300.300H1792.500L1794 301.800H1798Q1799 301.800 1799 303V304" fill="#f4c93a" stroke="#3a2a00" stroke-width="1" /><path d="M1787.800 310.500L1790.300 304H1800.800L1798 310.500Z" fill="url(#lyl)" stroke="#3a2a00" stroke-width="1" /><path d="M1816.500 298.500H1829.500V311.500H1816.500Z" fill="#3c57c8" stroke="#2a2a50" stroke-width="1" /><path d="M1816.500 298.500H1829.500V301H1816.500Z" fill="#dfe4f6" stroke="#2a2a50" stroke-width="0.8" /><path d="M1818 302.500H1828V310H1818Z" fill="#5a74dc" stroke="none" stroke-width="0" /><path d="M1851.800 297.300Q1857 297.800 1857 304V308.500L1858.800 310.500H1844.900L1846.600 308.500V304Q1846.600 297.800 1851.800 297.300Z" fill="#1f6ff0" stroke="#0a2a80" stroke-width="0.9" /><circle cx="1851.800" cy="311.800" r="1.500" fill="#0a3aa0"/><path d="M1874.600 302.500H1878L1879 300.500H1883.500L1884.500 302.500H1888V310.300H1874.600Z" fill="#2b2b2b" stroke="#000" stroke-width="0.8" /><circle cx="1881.300" cy="306.300" r="2.900" fill="#555" stroke="#ddd" stroke-width=".8"/><circle cx="1881.300" cy="306.300" r="1.200" fill="#111"/><circle cx="1912" cy="305.500" r="5.800" fill="none" stroke="#dfe1ea" stroke-width="2" stroke-dasharray="2.200 1.600"/><circle cx="1912" cy="305.500" r="4.500" fill="none" stroke="#dfe1ea" stroke-width="1"/><circle cx="1912" cy="305.500" r="1.600" fill="none" stroke="#dfe1ea" stroke-width="1"/><path d="M1679.800 326.800H1686L1689.500 330.300V339.500H1679.800Z" fill="url(#lw)" stroke="#000" stroke-width="1.2" /><path d="M1686 326.800V330.300H1689.500" fill="#fff" stroke="#000" stroke-width="0.8" /><path d="M1701 327H1706L1708.500 329.500V335.500H1701Z" fill="url(#lw)" stroke="#000" stroke-width="1.1" /><path d="M1705 331H1710L1712.500 333.500V339.500H1705Z" fill="url(#lw)" stroke="#000" stroke-width="1.1" /><path d="M1723.500 327L1736.500 339.500M1736.500 327L1723.500 339.500" fill="none" stroke="#bdbdbd" stroke-width="1.8" /><path d="M1747.200 335.800L1753.400 328.300L1759.600 335.800Z" fill="url(#lbl)" stroke="#10207a" stroke-width="1.1" stroke-linejoin="round"/><path d="M1768.500 328.500H1781.500L1775 336.800Z" fill="#bcbcbc" stroke="#a8a8a8" stroke-width="0.8" /><path d="M1801.500 326.500V339.500L1792.800 333Z" fill="#a9a9a9" stroke="#999" stroke-width="0.8" /><path d="M1814.500 326.500H1827.500L1822.800 332.500V340L1819.200 338V332.500Z" fill="url(#lfu)" stroke="#10207a" stroke-width="0.9" /><path d="M1828.500 337.500V340.500H1825.500Z" fill="#000" stroke="none" stroke-width="0" /><path d="M1838.800 326.800H1846L1850 330.500V339.500H1838.800Z" fill="#c9c9c9" stroke="#a5a5a5" stroke-width="1" /><path d="M1851.500 338V341H1848.500Z" fill="#9a9a9a" stroke="none" stroke-width="0" /><path d="M1860 338.500L1866.500 331.500" fill="none" stroke="#14286e" stroke-width="2.6" /><path d="M1863.500 328.500Q1868 325.500 1872.500 330.500L1870.500 332Q1868 329.500 1865 330.500Z" fill="#333" stroke="#000" stroke-width="0.8" /><path d="M1874 337.500V340.500H1871Z" fill="#000" stroke="none" stroke-width="0" /><circle cx="1888.900" cy="333" r="6.800" fill="url(#lsph)" stroke="#0a1a60" stroke-width=".6"/><path d="M1866 383.500L1869.500 387L1878 378.500" fill="none" stroke="#000" stroke-width="1.7" /><path d="M1888.300 395.200Q1892.800 395.200 1892.800 399.500Q1892.800 401.500 1890.800 403.500V406H1885.800V403.500Q1883.800 401.500 1883.800 399.500Q1883.800 395.200 1888.300 395.200Z" fill="#ffe97a" stroke="#5a4a00" stroke-width="0.9" /><path d="M1886.300 407.300H1890.300" fill="none" stroke="#5a4a00" stroke-width="1" /><path d="M1899.500 400.500H1908.500V407.500H1899.500Z" fill="#f8d54a" stroke="#3a2a00" stroke-width="1" /><path d="M1906 400.500V397.500Q1906 395 1909 395Q1912 395 1912 397.500V399.500" fill="none" stroke="#3a2a00" stroke-width="1.2" /><path d="M1906 400.500V397.500Q1906 395.600 1909 395.600Q1911.400 395.600 1911.400 397.500" fill="none" stroke="#fff" stroke-width="0.5" /><path d="M1678 983l-3.500 3.700l3.500 3.700" fill="none" stroke="#444" stroke-width="1.6" /><path d="M1905.500 983l3.500 3.700l-3.500 3.700" fill="none" stroke="#444" stroke-width="1.6" /></svg>
<div class="t" style="left:1885.6px;top:325.7px;font-size:12px;line-height:15px;color:#fff;letter-spacing:-0.3px;font-weight:bold;font-family:'Liberation Serif',serif;">?</div>
<div class="t" style="left:1819.8px;top:300.8px;font-size:9px;line-height:11px;color:#fff;letter-spacing:-0.3px;font-weight:bold;">?</div>
<!-- ===== taskbar icons ===== -->
<svg style="left:0;top:1050px" width="500" height="30" viewBox="0 1050 500 30">
<path d="M10 1059.200L16.800 1058.200V1064.400H10ZM17.800 1058L26 1056.800V1064.400H17.800ZM10 1065.400H16.800V1071.600L10 1070.600ZM17.800 1065.400H26V1073L17.800 1071.800Z" fill="#fff" stroke="none" stroke-width="0" />
<path d="M49 1058Q49 1057 50 1057H54.500L56 1058.500H64Q65 1058.500 65 1059.500V1071H49Z" fill="#f6b93b" stroke="none" stroke-width="0" />
<path d="M49 1061H65V1071.500H49Z" fill="#fcd668" stroke="none" stroke-width="0" />
<path d="M52.500 1066.500H61.500V1071.500H52.500Z" fill="#3f9ae6" stroke="none" stroke-width="0" />
<path d="M54.500 1068.500H59.500V1071.500H54.500Z" fill="#fcd668" stroke="none" stroke-width="0" />
<path d="M94 1057.500L101.500 1064.500Q102 1065.500 100.500 1066L97 1067L101 1069.500L97 1071.500H91L87 1069.500L91 1067L87.500 1066Q86 1065.500 86.500 1064.500Z" fill="#0a0a0a" stroke="#555" stroke-width="0.5" />
<path d="M94 1058.500L97.500 1062L94 1061L90.500 1062Z" fill="#fff" stroke="none" stroke-width="0" />
<path d="M90 1064.500L94 1063L98 1064.500L94 1065.500Z" fill="#9aa7b5" stroke="none" stroke-width="0" />
<path d="M123 1057H139V1073H123Z" fill="#d5e6f7" stroke="none" stroke-width="0" />
<path d="M160 1057H176V1073H160Z" fill="#f4e4e2" stroke="none" stroke-width="0" />
<path d="M210 1057L213.500 1058.500V1071.500L210 1073L198 1065ZM210 1061V1069L204.500 1065Z" fill="#1f9cf0" stroke="none" stroke-width="0" fill-rule="evenodd"/>
<path d="M199.500 1061L197.300 1062.500L200 1065L197.300 1067.500L199.500 1069L203.500 1065Z" fill="#0d7fd4" stroke="none" stroke-width="0" />
<path d="M246 1057L250 1058.800V1071.200L246 1073L236.500 1065ZM246 1061.500V1068.500L241.500 1065Z" fill="#a96fe0" stroke="none" stroke-width="0" fill-rule="evenodd"/>
<path d="M235.500 1060.500L233.700 1061.500V1068.500L235.500 1069.500L240.500 1065Z" fill="#8a4fd0" stroke="none" stroke-width="0" />
<circle cx="279" cy="1065" r="7" fill="#1a63e8"/><circle cx="279" cy="1064" r="2.600" fill="#fff"/><rect x="278.100" y="1064" width="1.800" height="5" fill="#fff"/><circle cx="279" cy="1064" r="1.100" fill="#1a63e8"/>
<path d="M310.500 1058.500L320 1057.500L322.500 1059.500V1071.500L313 1072.500L310.500 1069.500Z" fill="#fff" stroke="#111" stroke-width="1" />
<circle cx="353" cy="1065" r="8" fill="#1ed760"/>
<path d="M348.500 1062.300Q353.500 1060.800 358 1063.300M349 1065.200Q353.300 1064 357.200 1066M349.800 1068Q353.200 1067.200 356.200 1068.700" fill="none" stroke="#0a2a12" stroke-width="1.3" stroke-linecap="round"/>
<circle cx="390" cy="1065" r="7.500" fill="#db4437"/>
<path d="M390 1065L383.500 1061.300A7.500 7.500 0 0 0 389.500 1072.500Z" fill="#0f9d58" stroke="none" stroke-width="0" />
<path d="M390 1065L389.500 1072.500A7.500 7.500 0 0 0 397.100 1062.700Z" fill="#ffcd40" stroke="none" stroke-width="0" />
<circle cx="390" cy="1065" r="3.400" fill="#fff"/><circle cx="390" cy="1065" r="2.600" fill="#4285f4"/>
</svg>
<svg style="left:419px;top:1057px" width="16" height="16" viewBox="0 0 16 16"><rect width="16" height="16" fill="#050505"/><path d="M0 0H2.900L5 .8L7.200 5.300L8.600 7.600L10.800 9.400L13.200 9L15.700 8.500L12.500 11.600L10.400 15L9.400 15.500L6 12.800L2.500 9.600L0 7.700Z" fill="#fff"/><path d="M3.100 .2Q3 4 1 6.500" fill="none" stroke="#050505" stroke-width="1"/><path d="M3.300 8.400Q4.400 6.900 6.300 6.400M3.700 9.200L6.600 11.300L7.200 10.200" fill="none" stroke="#050505" stroke-width=".9"/><path d="M10.700 9.800Q12.600 9.200 13.400 7.500" fill="none" stroke="#050505" stroke-width="1"/><path d="M14.300 1.300L12.400 6.400" fill="none" stroke="#fff" stroke-width=".8" stroke-dasharray="1.200 .9"/></svg>
<svg style="left:456px;top:1057px" width="16" height="16" viewBox="0 0 16 16"><rect width="16" height="16" fill="#050505"/><path d="M0 0H2.900L5 .8L7.200 5.300L8.600 7.600L10.800 9.400L13.200 9L15.700 8.500L12.500 11.600L10.400 15L9.400 15.500L6 12.800L2.500 9.600L0 7.700Z" fill="#fff"/><path d="M3.100 .2Q3 4 1 6.500" fill="none" stroke="#050505" stroke-width="1"/><path d="M3.300 8.400Q4.400 6.900 6.300 6.400M3.700 9.200L6.600 11.300L7.200 10.200" fill="none" stroke="#050505" stroke-width=".9"/><path d="M10.700 9.800Q12.600 9.200 13.400 7.500" fill="none" stroke="#050505" stroke-width="1"/><path d="M14.300 1.300L12.400 6.400" fill="none" stroke="#fff" stroke-width=".8" stroke-dasharray="1.200 .9"/></svg>
<div class="t" style="left:126px;top:1055.8px;font-size:15px;line-height:19px;color:#2f6fb7;font-weight:bold;">R</div>
<div class="t" style="left:162.5px;top:1055.8px;font-size:15px;line-height:19px;color:#c8252c;font-weight:bold;">A</div>
<div class="t" style="left:312.5px;top:1058.3px;font-size:11px;line-height:14px;color:#111;font-weight:bold;font-family:'Liberation Serif',serif;">N</div>
<!-- ===== peeking dark toolbar behind dialog ===== -->
<div class="a" style="left:830px;top:0px;width:259px;height:7px;background:#2a2a2d;"></div>
<svg style="left:830px;top:0" width="259" height="7" viewBox="0 0 259 7"><g fill="none" stroke="#e8e8e8" stroke-width="1"><rect x="15.500" y="3.500" width="11" height="6" fill="#e8e8e8"/><rect x="42.500" y="3.500" width="15" height="6"/><rect x="68.500" y="3.500" width="15" height="6"/><rect x="94.500" y="3.500" width="15" height="6"/><path d="M127 6.500l3 -1.500M136 5l3 1.500"/></g><circle cx="162" cy="9" r="6" fill="#9ccf9c"/></svg>
<!-- ===== Fit dialog ===== -->
<div id="dlg" class="a" style="left:85px;top:6px;width:1184px;height:791px;border:1px solid #5a5a5a;background:#eeeef2;box-shadow:0 1px 12px rgba(0,0,0,.28);"></div>
<div class="a" style="left:86px;top:7px;width:1184px;height:30px;background:#fff;"></div>
<svg style="left:94px;top:13px" width="16" height="16" viewBox="0 0 16 16"><rect width="16" height="16" fill="#050505"/><path d="M0 0H2.900L5 .8L7.200 5.300L8.600 7.600L10.800 9.400L13.200 9L15.700 8.500L12.500 11.600L10.400 15L9.400 15.500L6 12.800L2.500 9.600L0 7.700Z" fill="#fff"/><path d="M3.100 .2Q3 4 1 6.500" fill="none" stroke="#050505" stroke-width="1"/><path d="M3.300 8.400Q4.400 6.900 6.300 6.400M3.700 9.200L6.600 11.300L7.200 10.200" fill="none" stroke="#050505" stroke-width=".9"/><path d="M10.700 9.800Q12.600 9.200 13.400 7.500" fill="none" stroke="#050505" stroke-width="1"/><path d="M14.300 1.300L12.400 6.400" fill="none" stroke="#fff" stroke-width=".8" stroke-dasharray="1.200 .9"/></svg>
<div class="t" style="left:115.5px;top:14.5px;font-size:12px;line-height:15px;color:#000;letter-spacing:-0.2px;">Fit</div>
<svg style="left:1249px;top:15px" width="12" height="12" viewBox="0 0 12 12"><path d="M1 1l10 10M11 1L1 11" stroke="#111" stroke-width="1.100" fill="none"/></svg>
<div class="a" style="left:549px;top:7px;width:259px;height:21px;background:#2d2d30;box-sizing:border-box;border:1px solid #222224;"></div>
<svg style="left:549px;top:7px" width="259" height="21" viewBox="0 0 259 21"><rect x="4.300" y="1.5" width="1" height="1" fill="#5e5e62"/><rect x="8.300" y="1.5" width="1" height="1" fill="#5e5e62"/><rect x="6.300" y="3.5" width="1" height="1" fill="#5e5e62"/><rect x="4.300" y="5.5" width="1" height="1" fill="#5e5e62"/><rect x="8.300" y="5.5" width="1" height="1" fill="#5e5e62"/><rect x="6.300" y="7.5" width="1" height="1" fill="#5e5e62"/><rect x="4.300" y="9.5" width="1" height="1" fill="#5e5e62"/><rect x="8.300" y="9.5" width="1" height="1" fill="#5e5e62"/><rect x="6.300" y="11.5" width="1" height="1" fill="#5e5e62"/><rect x="4.300" y="13.5" width="1" height="1" fill="#5e5e62"/><rect x="8.300" y="13.5" width="1" height="1" fill="#5e5e62"/><rect x="6.300" y="15.5" width="1" height="1" fill="#5e5e62"/><rect x="4.300" y="17.5" width="1" height="1" fill="#5e5e62"/><rect x="8.300" y="17.5" width="1" height="1" fill="#5e5e62"/><g fill="none" stroke="#f2f2f2" stroke-width="1.100"><rect x="16" y="2.100" width="10.800" height="2.100" fill="#f2f2f2" stroke="none"/><path d="M16.500 2.500V17.300H23 M18.500 7.500H24 M18.500 10.400H21 M18.500 13.300H20.300"/><circle cx="26.700" cy="12.300" r="3.300"/><path d="M26.700 7.500V10M26.700 14.600V17.900M21.400 12.300H24.400M29 12.300H31.800"/><path d="M45.500 11.700H42.500V2.700H57.500V11.700H53.500"/><rect x="68.500" y="2.600" width="15" height="14.700"/><rect x="72.500" y="6.900" width="7" height="6"/><path d="M94.500 5V2.600H97.500 M106.500 2.600H109.500V5 M109.500 10.500V12.700H107 M94.500 10.500V12.700H97.500"/><path d="M98.500 10.600H96.600V4.500H107.500V10.600H105.500" stroke-width="1"/><path d="M129.300 3.400Q127 3.400 127 5.600V7.800Q127 9.800 125.300 9.800Q127 9.800 127 11.800V14Q127 16.200 129.300 16.200 M136.200 3.400Q138.500 3.400 138.500 5.600V7.800Q138.500 9.800 140.200 9.800Q138.500 9.800 138.500 11.800V14Q138.500 16.200 136.200 16.200" stroke-width="1.500"/><circle cx="132.750" cy="9.900" r="3.500"/><path d="M131 9.900l1.300 1.400l2.300 -2.900" stroke-width="1.200"/></g><path d="M46 6.600V17.900L49.300 14.800H54Z" fill="#ececec"/><path d="M99.300 7.300V18L102.400 15.100H106.800Z" fill="#ececec"/><path d="M118.500 2.500V17.500M147.500 2.500V17.500" stroke="#434347" stroke-width="1"/><circle cx="162" cy="10" r="7.600" fill="#f6fff6" stroke="#58b358" stroke-width="1"/><circle cx="162" cy="10" r="6.200" fill="#eef9ee" stroke="#86cc86" stroke-width=".9"/><path d="M158.300 10.200l2.700 3.200l4.200 -7" fill="none" stroke="#2e9b2e" stroke-width="1.600"/><path d="M252 5.500l-4.500 4.700l4.500 4.700" fill="none" stroke="#5c5c60" stroke-width="1"/></svg>
<div class="t" style="left:721.5px;top:10.8px;font-size:11.4px;line-height:14px;color:#fff;letter-spacing:.15px;will-change:transform;">Hot Reload</div>
<div class="a" style="left:106px;top:57px;width:835px;height:721px;background:#fff;border-radius:6px;"></div>
<div class="a" style="left:961px;top:57px;width:289px;height:636px;background:#fff;border-radius:6px;"></div>
<div class="t" style="left:996px;top:71.5px;font-size:13px;line-height:16px;color:#c9cacd;">Input</div>
<div class="t" style="left:1098.5px;top:71.5px;font-size:13px;line-height:16px;color:#666b84;-webkit-text-stroke:.1px #666b84;">Fit</div>
<div class="t" style="left:1177.5px;top:71.5px;font-size:13px;line-height:16px;color:#c9cacd;">Settings</div>
<div class="t" style="left:975px;top:123.5px;font-size:13px;line-height:16px;color:#757373;-webkit-text-stroke:.1px #757373;">Filter</div>
<div class="t" style="left:975px;top:164.0px;font-size:13px;line-height:16px;color:#c3c3c6;-webkit-text-stroke:.25px #c3c3c6;">Amount of beds</div>
<div class="a" style="left:1139px;top:160px;width:98px;height:22px;border:1px solid #d4d4d4;border-radius:2px;background:#fff;"></div>
<div class="t" style="left:1143px;top:164.5px;font-size:12.2px;line-height:15px;color:#bdbdbf;-webkit-text-stroke:.2px #bdbdbf;">Any</div>
<svg style="left:1224px;top:169px" width="10" height="7" viewBox="0 0 10 7"><path d="M1 1l4 4l4 -4" fill="none" stroke="#d6d6d6" stroke-width="1.200"/></svg>
<div class="t" style="left:975px;top:204.0px;font-size:13px;line-height:16px;color:#c3c3c6;-webkit-text-stroke:.25px #c3c3c6;">Amount of baths</div>
<div class="a" style="left:1139px;top:200px;width:98px;height:22px;border:1px solid #d4d4d4;border-radius:2px;background:#fff;"></div>
<div class="t" style="left:1143px;top:204.5px;font-size:12.2px;line-height:15px;color:#bdbdbf;-webkit-text-stroke:.2px #bdbdbf;">Any</div>
<svg style="left:1224px;top:209px" width="10" height="7" viewBox="0 0 10 7"><path d="M1 1l4 4l4 -4" fill="none" stroke="#d6d6d6" stroke-width="1.200"/></svg>
<div class="t" style="left:975px;top:244.0px;font-size:13px;line-height:16px;color:#c3c3c6;-webkit-text-stroke:.25px #c3c3c6;">Country</div>
<div class="a" style="left:1139px;top:240px;width:98px;height:22px;border:1px solid #d4d4d4;border-radius:2px;background:#fff;"></div>
<div class="t" style="left:1143px;top:244.5px;font-size:12.2px;line-height:15px;color:#bdbdbf;-webkit-text-stroke:.2px #bdbdbf;">ALL</div>
<svg style="left:1224px;top:249px" width="10" height="7" viewBox="0 0 10 7"><path d="M1 1l4 4l4 -4" fill="none" stroke="#d6d6d6" stroke-width="1.200"/></svg>
<div class="a" style="left:969px;top:645px;width:129.400px;height:37.800px;border:1.200px solid #3b7fbe;border-radius:4.500px;background:#c1e4fc;"></div>
<div class="a" style="left:1111px;top:645px;width:128.400px;height:37.800px;border:1.200px solid #b9b9b9;border-radius:4.500px;background:#f4f4f4;"></div>
<svg style="left:1015px;top:650px" width="30" height="30" viewBox="1015 650 30 30"><path d="M1034.300 656.500L1024.300 665.300L1034.300 674" fill="none" stroke="#b7c7d1" stroke-width="1.800"/></svg>
<svg style="left:1160px;top:650px" width="30" height="30" viewBox="1160 650 30 30"><path d="M1171 656.500L1181.500 664.800L1171.300 673.500" fill="none" stroke="#c7c7c7" stroke-width="1.800"/></svg>
<div class="a" style="left:1122px;top:658px;width:19.500px;height:19.500px;border-radius:50%;background:#f3eec6;filter:blur(1.600px);opacity:.92;"></div>
<svg style="left:1059px;top:650.500px" width="22" height="28" viewBox="0 0 20 26"><path d="M6.500 13V3.200q0 -1.500 1.400 -1.500q1.400 0 1.400 1.500V9.500 q0 -1 1.300 -1q1.300 0 1.300 1.200v.8q0 -1 1.300 -1q1.300 0 1.300 1.200v.8q0 -.9 1.200 -.9q1.200 0 1.200 1.300v5.600q0 3 -1.500 5q-1.500 2 -4.500 2q-3 0 -4.600 -2.200l-3.800 -5.200q-.8 -1.200 .2 -2q1 -.7 2.100 .4z" fill="#fff" stroke="#0b1a33" stroke-width="1.200" stroke-linejoin="round"/><path d="M9.300 9.500v3.500M11.900 10.500v2.500M14.500 11.500v1.500" stroke="#0b1a33" stroke-width="1" fill="none"/></svg>
<div class="a" style="left:962px;top:714px;width:78px;height:63px;background:#fff;border-radius:5px;"></div>
<div class="a" style="left:1061px;top:713px;width:189px;height:65px;background:#0073ff;border-radius:5px;"></div>
<div class="t" style="left:962px;top:736.9px;font-size:14.6px;line-height:18px;color:#c9c9cb;-webkit-text-stroke:.2px #c9c9cb;width:78px;text-align:center;">Cancel</div>
<div class="t" style="left:1061px;top:736.9px;font-size:14px;line-height:18px;color:#fff;font-weight:bold;width:189px;text-align:center;">OK</div>
<!-- ===== floor plan ===== -->
<svg style="left:240px;top:340px" width="570" height="420" viewBox="240 340 570 420">
<rect x="264.0" y="357.0" width="520.0" height="386.0" fill="#fcfcfc"/>
<rect x="279.5" y="426.5" width="27.0" height="14.5" fill="#fdfdfd" stroke="#dcdcdc" stroke-width="1"/>
<rect x="279.5" y="487.0" width="27.0" height="14.0" fill="#fdfdfd" stroke="#dcdcdc" stroke-width="1"/>
<rect x="319.5" y="426.5" width="27.0" height="14.5" fill="#fdfdfd" stroke="#dcdcdc" stroke-width="1"/>
<rect x="319.5" y="487.0" width="27.0" height="14.0" fill="#fdfdfd" stroke="#dcdcdc" stroke-width="1"/>
<rect x="270.5" y="441.0" width="85.5" height="46.0" fill="#fff" stroke="#dcdcdc" stroke-width="1"/>
<rect x="371.0" y="364.0" width="34.5" height="33.0" fill="#fdfdfd" stroke="#dcdcdc" stroke-width="1"/>
<path d="M371 364L405.500 397M405.500 364L371 397" fill="none" stroke="#dcdcdc" stroke-width="1"/>
<path d="M405.500 397H462V507H496" fill="none" stroke="#e2e2e2" stroke-width="1"/>
<rect x="426.0" y="364.0" width="34.0" height="25.0" fill="#fdfdfd" stroke="#dcdcdc" stroke-width="1"/>
<rect x="429.0" y="369.0" width="28.5" height="17.0" fill="#fdfdfd" stroke="#dcdcdc" stroke-width="1"/>
<rect x="462.0" y="424.0" width="34.0" height="34.0" fill="#fdfdfd" stroke="#dcdcdc" stroke-width="1"/>
<circle cx="470.5" cy="432.5" r="4.8" fill="none" stroke="#d6d6d6" stroke-width="1"/>
<circle cx="487.5" cy="432.5" r="5.8" fill="none" stroke="#d6d6d6" stroke-width="1"/>
<circle cx="470.5" cy="450" r="5.8" fill="none" stroke="#d6d6d6" stroke-width="1"/>
<circle cx="487.5" cy="450" r="4.6" fill="none" stroke="#d6d6d6" stroke-width="1"/>
<rect x="503.0" y="364.0" width="50.5" height="53.0" fill="#fdfdfd" stroke="#dcdcdc" stroke-width="1"/>
<rect x="505.5" y="368.0" width="45.5" height="45.5" fill="#fff" stroke="#dcdcdc" stroke-width="1"/>
<rect x="503.0" y="423.0" width="28.0" height="76.0" fill="#fdfdfd" stroke="#dcdcdc" stroke-width="1"/>
<rect x="511.0" y="434.5" width="14.0" height="24.0" fill="#fdfdfd" stroke="#dcdcdc" stroke-width="1"/>
<rect x="511.0" y="469.5" width="14.0" height="23.0" fill="#fdfdfd" stroke="#dcdcdc" stroke-width="1"/>
<rect x="351.0" y="547.0" width="51.5" height="45.5" fill="#fdfdfd" stroke="#dcdcdc" stroke-width="1"/>
<rect x="359.0" y="559.0" width="34.5" height="33.5" fill="#fdfdfd" stroke="#dcdcdc" stroke-width="1"/>
<rect x="348.0" y="620.0" width="57.0" height="28.0" fill="#fff" stroke="#dcdcdc" stroke-width="1"/>
<path d="M276 597H321V670H356V711.500H276Z" fill="#fdfdfd" stroke="#e0e0e0" stroke-width="1"/>
<rect x="287.0" y="604.5" width="34.0" height="32.5" fill="#fff" stroke="#dcdcdc" stroke-width="1"/>
<rect x="287.0" y="637.0" width="34.0" height="33.0" fill="#fff" stroke="#dcdcdc" stroke-width="1"/>
<rect x="287.0" y="670.0" width="34.0" height="32.0" fill="#fff" stroke="#dcdcdc" stroke-width="1"/>
<rect x="321.0" y="670.0" width="35.0" height="32.0" fill="#fff" stroke="#dcdcdc" stroke-width="1"/>
<rect x="482.0" y="603.0" width="14.0" height="79.0" fill="#fdfdfd" stroke="#dcdcdc" stroke-width="1"/>
<rect x="487.5" y="608.5" width="3.0" height="67.5" fill="#ececec" stroke="#e4e4e4" stroke-width="1"/>
<rect x="503.0" y="607.5" width="50.5" height="114.5" fill="#fff" stroke="#dcdcdc" stroke-width="1"/>
<rect x="508.5" y="612.5" width="40.0" height="23.5" fill="#fdfdfd" stroke="#dcdcdc" stroke-width="1"/>
<path d="M502.800 652L520.300 636.400M520.300 636.400V654H502.800" fill="none" stroke="#d8d8d8" stroke-width="1"/>
<rect x="756.0" y="584.5" width="22.0" height="23.0" fill="#fdfdfd" stroke="#dcdcdc" stroke-width="1"/>
<rect x="756.0" y="713.0" width="22.0" height="20.0" fill="#fdfdfd" stroke="#dcdcdc" stroke-width="1"/>
<rect x="750.5" y="614.0" width="22.5" height="39.5" fill="#fdfdfd" stroke="#dcdcdc" stroke-width="1"/>
<rect x="750.5" y="665.0" width="22.5" height="46.0" fill="#fdfdfd" stroke="#dcdcdc" stroke-width="1"/>
<rect x="664.0" y="607.5" width="86.5" height="104.0" fill="#fff" stroke="#dcdcdc" stroke-width="1"/>
<path d="M733 607.500V625H750.500M733 607.500L750.500 625" fill="none" stroke="#d8d8d8" stroke-width="1"/>
<path d="M778 380.500H756Q745.500 380.500 745.500 391Q745.500 401.800 756 401.800H778" fill="#fdfdfd" stroke="#dadada" stroke-width="1.2"/>
<path d="M771.800 380.500V401.800" fill="none" stroke="#e0e0e0" stroke-width="1.2"/>
<path d="M282.8 737.2H481.4" stroke="#dcdcdc" stroke-width="1.1" fill="none"/>
<path d="M282.8 741.2H481.4" stroke="#dcdcdc" stroke-width="1.1" fill="none"/>
<path d="M282.8 745.2H481.4" stroke="#dcdcdc" stroke-width="1.1" fill="none"/>
<path d="M282.8 749H481.4" stroke="#dcdcdc" stroke-width="1.1" fill="none"/>
<path d="M516.9 737.2H593.5" stroke="#dcdcdc" stroke-width="1.1" fill="none"/>
<path d="M516.9 741.2H593.5" stroke="#dcdcdc" stroke-width="1.1" fill="none"/>
<path d="M516.9 745.2H593.5" stroke="#dcdcdc" stroke-width="1.1" fill="none"/>
<path d="M516.9 749H593.5" stroke="#dcdcdc" stroke-width="1.1" fill="none"/>
<path d="M628.9 737.2H766.5" stroke="#dcdcdc" stroke-width="1.1" fill="none"/>
<path d="M628.9 741.2H766.5" stroke="#dcdcdc" stroke-width="1.1" fill="none"/>
<path d="M628.9 745.2H766.5" stroke="#dcdcdc" stroke-width="1.1" fill="none"/>
<path d="M628.9 749H766.5" stroke="#dcdcdc" stroke-width="1.1" fill="none"/>
<path d="M450.500 513.500H496.500V516.500H450.500Z" fill="#e4e4e4" stroke="#cdcdcd" stroke-width="1"/>
<path d="M451 516.500A46 46 0 0 0 497 560" fill="none" stroke="#d3d3d3" stroke-width="1.3"/>
<path d="M498.700 514V560" fill="none" stroke="#dedede" stroke-width="1.3"/>
<path d="M582.300 505H585.700V551H582.300Z" fill="#e2e2e2" stroke="#dcdcdc" stroke-width="0.6"/>
<path d="M629.500 506A44.500 44.500 0 0 1 585.500 550.500" fill="none" stroke="#d3d3d3" stroke-width="1.3"/>
<path d="M581 502.800H630" fill="none" stroke="#dcdcdc" stroke-width="1.3"/>
<path d="M652 550.500H697V554H652Z" fill="#efefef" stroke="#d2d2d2" stroke-width="1"/>
<path d="M652.500 550.500A45 45 0 0 1 697 506.500" fill="none" stroke="#d3d3d3" stroke-width="1.3"/>
<path d="M700 506V555" fill="none" stroke="#e2e2e2" stroke-width="1.3"/>
<path d="M651 367.500H697V371.500H651Z" fill="#f0f0f0" stroke="#d0d0d0" stroke-width="1"/>
<path d="M646.200 362.500H650.800V411.500H646.200Z" fill="#f4f4f4" stroke="#d0d0d0" stroke-width="1"/>
<path d="M651.200 370A46 46 0 0 0 697.500 414.800" fill="none" stroke="#d3d3d3" stroke-width="1.3"/>
<path d="M697 369.500A47 47 0 0 1 649 411.500" fill="none" stroke="#d3d3d3" stroke-width="1.3"/>
<path d="M638.300 374V407M638.300 407L646 374M640.500 407L647.500 374" fill="none" stroke="#d6d6d6" stroke-width="1.3"/>
<path d="M700.300 366V416" fill="none" stroke="#d8d8d8" stroke-width="1.3"/>
<path d="M596.800 567H600.200V613.500H596.800Z" fill="#f1f1f1" stroke="#d2d2d2" stroke-width="1"/>
<path d="M554.200 566A43.500 47 0 0 0 597 613" fill="none" stroke="#d3d3d3" stroke-width="1.3"/>
<path d="M553 563.500H601" fill="none" stroke="#dcdcdc" stroke-width="1.3"/>
<path d="M621.500 567H625V613.500H621.500Z" fill="#f1f1f1" stroke="#d2d2d2" stroke-width="1"/>
<path d="M667.500 566A43 47 0 0 1 624.500 613" fill="none" stroke="#d3d3d3" stroke-width="1.3"/>
<path d="M621 563.500H668" fill="none" stroke="#dcdcdc" stroke-width="1.3"/>
<rect x="580.3" y="499.5" width="2.400" height="6.500" fill="#fafafa" stroke="#d0d0d0" stroke-width=".8"/>
<rect x="627.8" y="499.5" width="2.400" height="6.500" fill="#fafafa" stroke="#d0d0d0" stroke-width=".8"/>
<rect x="552.0" y="560.4" width="2.400" height="6.500" fill="#fafafa" stroke="#d0d0d0" stroke-width=".8"/>
<rect x="598.3" y="560.4" width="2.400" height="6.500" fill="#fafafa" stroke="#d0d0d0" stroke-width=".8"/>
<rect x="621.0" y="560.4" width="2.400" height="6.500" fill="#fafafa" stroke="#d0d0d0" stroke-width=".8"/>
<rect x="666.3" y="560.4" width="2.400" height="6.500" fill="#fafafa" stroke="#d0d0d0" stroke-width=".8"/>
<rect x="496.5" y="511.0" width="2.400" height="6.500" fill="#fafafa" stroke="#d0d0d0" stroke-width=".8"/>
<rect x="697.0" y="506.2" width="2.400" height="6.500" fill="#fafafa" stroke="#d0d0d0" stroke-width=".8"/>
<rect x="697.0" y="551.5" width="2.400" height="6.500" fill="#fafafa" stroke="#d0d0d0" stroke-width=".8"/>
<rect x="258.1" y="351.2" width="386.7" height="11.8" fill="#b3b3b1"/>
<rect x="699.9" y="351.2" width="90.8" height="11.8" fill="#b3b3b1"/>
<rect x="258.1" y="351.2" width="12.7" height="398.4" fill="#b3b3b1"/>
<rect x="777.8" y="351.2" width="12.9" height="398.4" fill="#b3b3b1"/>
<rect x="258.1" y="736.2" width="25.1" height="13.4" fill="#b3b3b1"/>
<rect x="481.0" y="736.2" width="36.3" height="13.4" fill="#b3b3b1"/>
<rect x="593.1" y="736.2" width="36.2" height="13.4" fill="#b3b3b1"/>
<rect x="766.1" y="736.2" width="24.6" height="13.4" fill="#b3b3b1"/>
<rect x="495.4" y="362.1" width="7.3" height="149.3" fill="#b3b3b1"/>
<rect x="495.4" y="499.1" width="85.3" height="7.5" fill="#b3b3b1"/>
<rect x="607.1" y="362.1" width="7.6" height="60.6" fill="#b3b3b1"/>
<rect x="607.1" y="415.1" width="36.3" height="7.6" fill="#b3b3b1"/>
<rect x="635.1" y="407.3" width="8.3" height="99.3" fill="#b3b3b1"/>
<rect x="629.5" y="499.1" width="13.9" height="7.5" fill="#b3b3b1"/>
<rect x="696.1" y="415.6" width="7.6" height="91.0" fill="#b3b3b1"/>
<rect x="702.9" y="421.4" width="75.7" height="6.8" fill="#b3b3b1"/>
<rect x="495.4" y="560.0" width="57.0" height="7.6" fill="#b3b3b1"/>
<rect x="600.3" y="560.0" width="21.1" height="7.6" fill="#b3b3b1"/>
<rect x="668.3" y="560.0" width="110.3" height="7.6" fill="#b3b3b1"/>
<rect x="696.1" y="554.2" width="7.5" height="6.6" fill="#b3b3b1"/>
<rect x="495.4" y="560.0" width="7.3" height="177.4" fill="#b3b3b1"/>
<rect x="607.5" y="566.6" width="7.2" height="170.8" fill="#b3b3b1"/>
<rect x="259.2" y="352.3" width="384.5" height="9.6" fill="#d5d5d3"/>
<rect x="701.0" y="352.3" width="88.6" height="9.6" fill="#d5d5d3"/>
<rect x="259.2" y="352.3" width="10.5" height="396.2" fill="#d5d5d3"/>
<rect x="778.9" y="352.3" width="10.7" height="396.2" fill="#d5d5d3"/>
<rect x="259.2" y="737.3" width="22.9" height="11.2" fill="#d5d5d3"/>
<rect x="482.1" y="737.3" width="34.1" height="11.2" fill="#d5d5d3"/>
<rect x="594.2" y="737.3" width="34.0" height="11.2" fill="#d5d5d3"/>
<rect x="767.2" y="737.3" width="22.4" height="11.2" fill="#d5d5d3"/>
<rect x="496.5" y="363.2" width="5.1" height="147.1" fill="#d5d5d3"/>
<rect x="496.5" y="500.2" width="83.1" height="5.3" fill="#d5d5d3"/>
<rect x="608.2" y="363.2" width="5.4" height="58.4" fill="#d5d5d3"/>
<rect x="608.2" y="416.2" width="34.1" height="5.4" fill="#d5d5d3"/>
<rect x="636.2" y="408.4" width="6.1" height="97.1" fill="#d5d5d3"/>
<rect x="630.6" y="500.2" width="11.7" height="5.3" fill="#d5d5d3"/>
<rect x="697.2" y="416.7" width="5.4" height="88.8" fill="#d5d5d3"/>
<rect x="704.0" y="422.5" width="73.5" height="4.6" fill="#d5d5d3"/>
<rect x="496.5" y="561.1" width="54.8" height="5.4" fill="#d5d5d3"/>
<rect x="601.4" y="561.1" width="18.9" height="5.4" fill="#d5d5d3"/>
<rect x="669.4" y="561.1" width="108.1" height="5.4" fill="#d5d5d3"/>
<rect x="697.2" y="555.3" width="5.3" height="4.4" fill="#d5d5d3"/>
<rect x="496.5" y="561.1" width="5.1" height="175.2" fill="#d5d5d3"/>
<rect x="608.6" y="567.7" width="5.0" height="168.6" fill="#d5d5d3"/>
<rect x="635.5" y="362.5" width="7.5" height="11.7" fill="#c4c4c2"/>
<rect x="696.5" y="362.5" width="6.8" height="4.0" fill="#c9c9c7"/>
<path d="M265.200 358V704.900H784V358" fill="none" stroke="#a6d3ff" stroke-width="3.600" opacity=".5"/>
<path d="M265.200 358H784" fill="none" stroke="#b4dcff" stroke-width="4.200" opacity=".75"/>
<path d="M265.200 357V704.900H784V357" fill="none" stroke="#2b7fe3" stroke-width="1.800"/>
<path d="M264.300 358H784.900" fill="none" stroke="#3a7ccb" stroke-width="2"/>
<rect x="626" y="354" width="8.200" height="7.800" fill="#1e8fff"/>
</svg>

</div>
</body>
</html>
